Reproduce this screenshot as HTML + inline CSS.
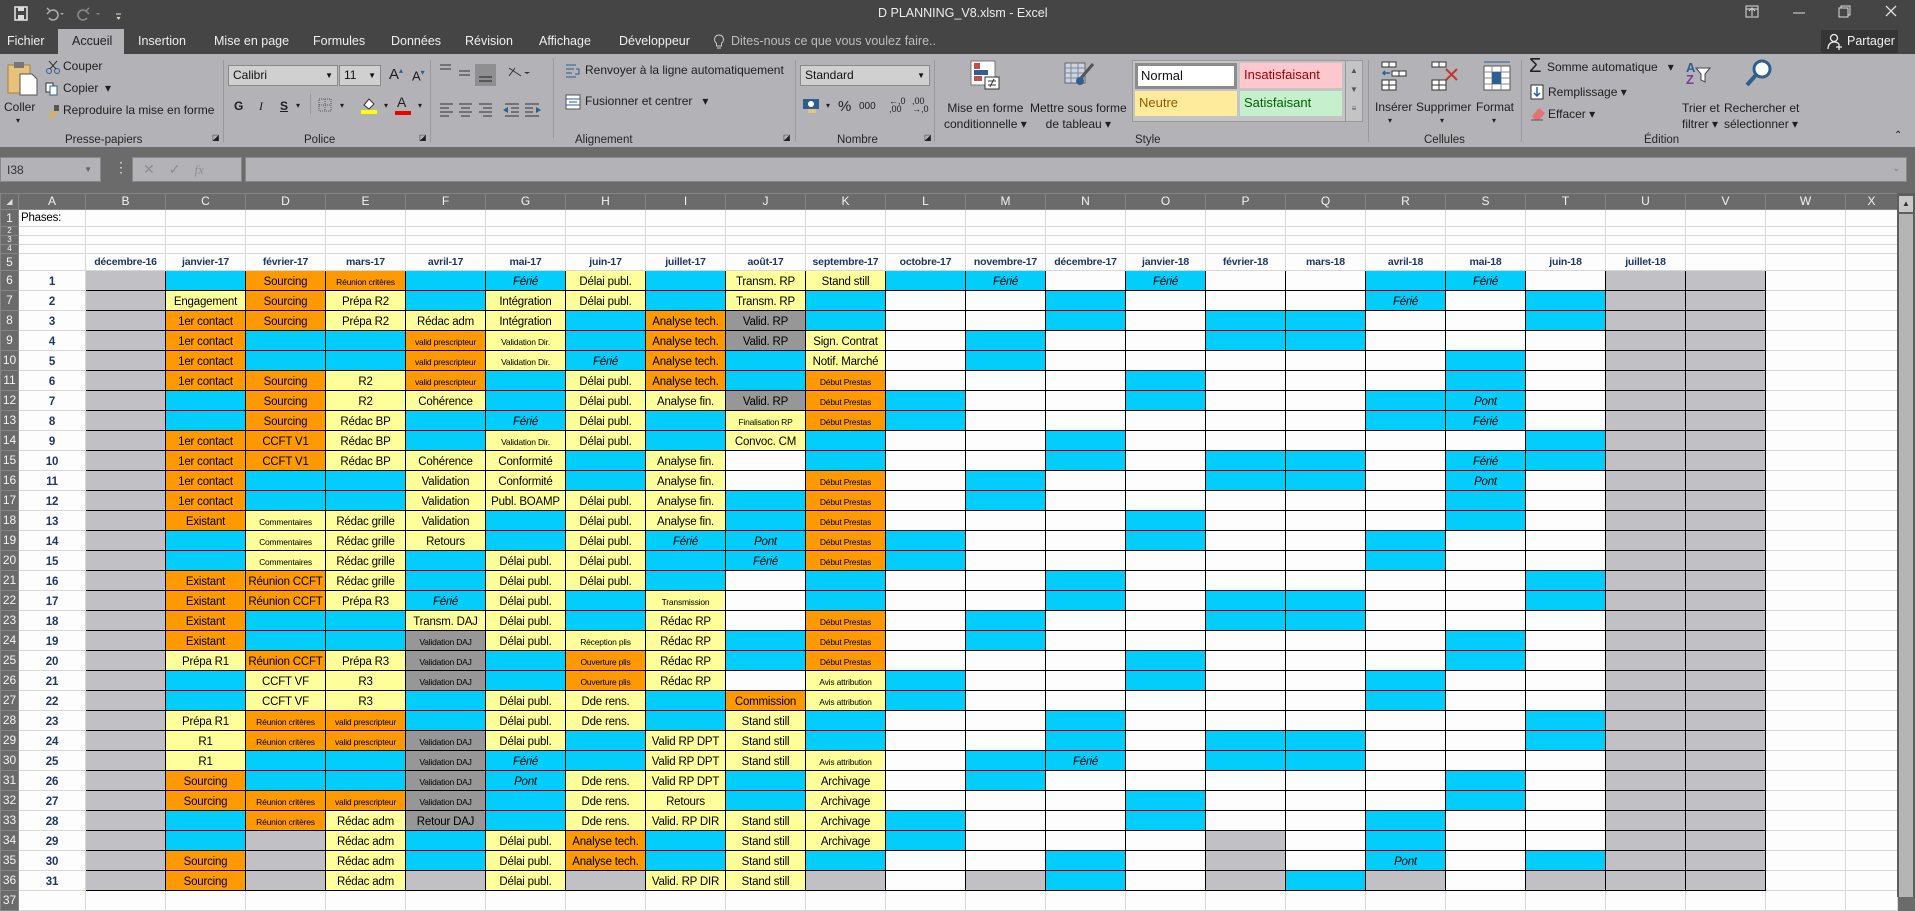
<!DOCTYPE html>
<html><head><meta charset="utf-8"><style>
*{margin:0;padding:0;box-sizing:border-box}
body{width:1915px;height:897px;overflow:hidden;background:#6b6b6b;font-family:"Liberation Sans",sans-serif;position:relative}
.a{position:absolute;white-space:nowrap}
#title{left:0;top:0;width:1915px;height:54px;background:#454545}
.tab{position:absolute;top:34px;font-size:12.5px;color:#f0f0f0}
#rib{left:0;top:54px;width:1915px;height:93px;background:#b3b2b6}
.rt{position:absolute;font-size:12px;color:#1e1e1e;white-space:nowrap}
.gl{position:absolute;top:80px;font-size:11.5px;color:#262626}
.sep{position:absolute;top:6px;width:1px;height:82px;background:#9a9a9e}
.box{position:absolute;background:#d0d0d0;border:1px solid #8a8a8a;font-size:12px;padding:2px 4px;color:#111}
table{position:absolute;left:0;top:193px;border-collapse:collapse;table-layout:fixed;font-family:"Liberation Sans",sans-serif}
td,th{padding:0;overflow:hidden;white-space:nowrap;text-align:center;vertical-align:bottom;font-size:11.5px;letter-spacing:-0.2px;line-height:15px;border:1px solid #d8d8d8;background:#fcfdfc}
th{background:#6b6b6b;color:#f2f2f2;font-weight:normal;border:1px solid #858585;font-size:12px;vertical-align:middle;letter-spacing:0}
td.t{border:1px solid #000}
.g{background:#c1c0c4}.c{background:#03cdfa}.o{background:#fe9a00}.y{background:#feff9a}.d{background:#979797}.w{background:#fcfdfc}
td.s{font-size:8.5px;letter-spacing:-0.2px}.i{font-style:italic}
td.m{color:#1f3764;font-weight:bold;font-size:10.5px;letter-spacing:-0.2px}
.n{color:#1f3764;font-weight:bold}
</style></head><body>
<div id="title" class="a"></div>
<svg class="a" style="left:12px;top:5px" width="110" height="18" viewBox="0 0 110 18"><rect x="3" y="2" width="12" height="13" fill="none" stroke="#ddd" stroke-width="1.6"/><rect x="6" y="2" width="6" height="4" fill="#ddd"/><rect x="6" y="10" width="6" height="5" fill="#ddd"/><path d="M38 6 a5 5 0 1 1 -1 7" fill="none" stroke="#aaa" stroke-width="1.6"/><path d="M35 3 l3 3 -3 3" fill="none" stroke="#aaa" stroke-width="1.5"/><path d="M48 8l2 2 2-2" fill="#aaa"/><path d="M74 6 a5 5 0 1 0 1 7" fill="none" stroke="#888" stroke-width="1.6"/><path d="M77 3 l-3 3 3 3" fill="none" stroke="#888" stroke-width="1.5"/><path d="M84 8l2 2 2-2" fill="#888"/><path d="M104 9h5M105 12l1.5 2 1.5-2" stroke="#ddd" fill="#ddd"/></svg>
<div class="a" style="left:878px;top:6px;font-size:12.5px;color:#eee">D PLANNING_V8.xlsm - Excel</div>
<svg class="a" style="left:1740px;top:2px" width="170" height="20"><rect x="6" y="4" width="12" height="11" fill="none" stroke="#ddd"/><path d="M12 14V7M9 9l3-3 3 3M6 7h12" stroke="#ddd" fill="none"/><path d="M53 11h12" stroke="#ddd"/><rect x="99" y="6" width="9" height="9" fill="none" stroke="#ddd"/><path d="M101 6V4h9v9h-2" stroke="#ddd" fill="none"/><path d="M146 4l10 10M156 4l-10 10" stroke="#ddd" stroke-width="1.3"/></svg>
<div class="tab" style="left:7px">Fichier</div>
<div class="a" style="left:58px;top:29px;width:66px;height:26px;background:#b3b2b6"></div>
<div class="tab" style="left:72px;color:#222">Accueil</div>
<div class="tab" style="left:138px">Insertion</div>
<div class="tab" style="left:214px">Mise en page</div>
<div class="tab" style="left:313px">Formules</div>
<div class="tab" style="left:391px">Données</div>
<div class="tab" style="left:465px">Révision</div>
<div class="tab" style="left:539px">Affichage</div>
<div class="tab" style="left:619px">Développeur</div>
<svg class="a" style="left:713px;top:34px" width="12" height="16"><path d="M6 1a4.5 4.5 0 0 0-2.5 8.2V12h5V9.2A4.5 4.5 0 0 0 6 1zM4 14h4" fill="none" stroke="#ccc"/></svg>
<div class="tab" style="left:731px;color:#bdbdbd">Dites-nous ce que vous voulez faire..</div>
<div class="a" style="left:1821px;top:30px;width:77px;height:23px;background:#353535"></div>
<svg class="a" style="left:1827px;top:33px" width="16" height="18"><circle cx="7" cy="5" r="3.5" fill="none" stroke="#eee" stroke-width="1.3"/><path d="M1 16c0-5 3-7 6-7s4 1 5 2M12 11v6M9 14h6" fill="none" stroke="#eee" stroke-width="1.3"/></svg>
<div class="tab" style="left:1847px;top:34px;color:#f2f2f2">Partager</div>

<div id="rib" class="a">
 <svg style="position:absolute;left:6px;top:6px" width="34" height="36"><rect x="2" y="5" width="22" height="28" fill="#e6c27a" stroke="#a58340"/><rect x="8" y="2" width="10" height="6" fill="#777"/><path d="M14 14h12l5 5v16H14z" fill="#fff" stroke="#555"/></svg>
 <div class="rt" style="left:4px;top:46px">Coller</div>
 <div class="rt" style="left:16px;top:62px;font-size:8px">▾</div>
 <svg style="position:absolute;left:45px;top:6px" width="16" height="14"><circle cx="4" cy="11" r="2.5" fill="none" stroke="#2f5f8f"/><circle cx="12" cy="11" r="2.5" fill="none" stroke="#2f5f8f"/><path d="M5 9L12 1M11 9L4 1" stroke="#333"/></svg>
 <div class="rt" style="left:63px;top:5px">Couper</div>
 <svg style="position:absolute;left:45px;top:28px" width="14" height="14"><rect x="1" y="1" width="7" height="9" fill="#fff" stroke="#333"/><rect x="5" y="4" width="7" height="9" fill="#fff" stroke="#2f5f8f"/></svg>
 <div class="rt" style="left:63px;top:27px">Copier &nbsp;▾</div>
 <svg style="position:absolute;left:46px;top:50px" width="14" height="14"><path d="M2 13l6-7 3 3-6 6z" fill="#d9b055"/><rect x="8" y="1" width="5" height="6" fill="#555"/></svg>
 <div class="rt" style="left:63px;top:49px">Reproduire la mise en forme</div>
 <div class="gl" style="left:65px">Presse-papiers</div>
 <div class="rt" style="left:212px;top:79px;font-size:8px">◪</div>
 <div class="sep" style="left:223px"></div>
 <div class="box" style="left:228px;top:11px;width:110px;height:21px">Calibri<span style="position:absolute;right:4px;font-size:8px;top:5px">▼</span></div>
 <div class="box" style="left:339px;top:11px;width:42px;height:21px">11<span style="position:absolute;right:4px;font-size:8px;top:5px">▼</span></div>
 <div class="rt" style="left:389px;top:12px;font-size:15px">A<sup style="font-size:8px;color:#2f5f8f">▴</sup></div>
 <div class="rt" style="left:412px;top:14px;font-size:13px">A<sup style="font-size:8px;color:#2f5f8f">▾</sup></div>
 <div class="rt" style="left:234px;top:45px;font-weight:bold">G</div>
 <div class="rt" style="left:259px;top:45px;font-style:italic;font-family:'Liberation Serif'">I</div>
 <div class="rt" style="left:280px;top:45px;text-decoration:underline;font-weight:bold">S</div>
 <div class="rt" style="left:296px;top:47px;font-size:8px">▾</div>
 <div class="sep" style="left:310px;top:40px;height:20px"></div>
 <svg style="position:absolute;left:318px;top:44px" width="14" height="14"><rect x="1" y="1" width="12" height="12" fill="none" stroke="#555" stroke-dasharray="1 1"/><path d="M7 1v12M1 7h12" stroke="#555" stroke-dasharray="1 1"/></svg>
 <div class="rt" style="left:340px;top:47px;font-size:8px">▾</div>
 <svg style="position:absolute;left:360px;top:42px" width="18" height="18"><path d="M4 9l5-6 5 5-5 5z" fill="#fff" stroke="#333"/><rect x="1" y="14" width="16" height="4" fill="#ffff00"/></svg>
 <div class="rt" style="left:384px;top:47px;font-size:8px">▾</div>
 <div class="rt" style="left:397px;top:40px;font-size:14px">A</div>
 <div class="a" style="left:395px;top:57px;width:16px;height:4px;background:#e00"></div>
 <div class="rt" style="left:418px;top:47px;font-size:8px">▾</div>
 <div class="gl" style="left:304px">Police</div>
 <div class="rt" style="left:419px;top:79px;font-size:8px">◪</div>
 <div class="sep" style="left:430px"></div>
 <svg style="position:absolute;left:437px;top:8px" width="120" height="60"><g stroke="#333" stroke-width="1"><path d="M3 3h11M3 7h11"/><path d="M22 9h11M22 13h11"/></g><rect x="38" y="2" width="21" height="22" fill="#8f8f91"/><path d="M42 15h13M42 19h13" stroke="#222"/><path d="M72 6l12 8M72 14l6-8" stroke="#333"/><path d="M87 10l3 2 3-2" fill="#333"/><g stroke="#333"><path d="M3 42h13M3 46h9M3 50h13M3 54h9"/><path d="M22 42h13M24 46h9M22 50h13M24 54h9"/><path d="M42 42h13M46 46h9M42 50h13M46 54h9"/></g><g stroke="#333"><path d="M68 42h14M74 46h8M74 50h8M68 54h14M88 42h14M88 46h8M88 50h8M88 54h14"/></g><path d="M66 48l5-3v6z M104 48l-5-3v6z" fill="#2f5f8f"/></svg>
 <div class="sep" style="left:553px;top:4px;height:80px"></div>
 <svg style="position:absolute;left:565px;top:9px" width="16" height="16"><path d="M1 2h10M1 6h8M1 10h6M1 14h10" stroke="#2f5f8f"/><path d="M11 6h3v5h-4" fill="none" stroke="#2f5f8f"/></svg>
 <div class="rt" style="left:585px;top:9px">Renvoyer à la ligne automatiquement</div>
 <svg style="position:absolute;left:565px;top:40px" width="16" height="16"><rect x="1" y="1" width="14" height="14" fill="#fff" stroke="#555"/><path d="M1 5h14M1 11h14M4 8h8" stroke="#2f5f8f"/></svg>
 <div class="rt" style="left:585px;top:40px">Fusionner et centrer &nbsp;&nbsp;▾</div>
 <div class="gl" style="left:575px">Alignement</div>
 <div class="rt" style="left:783px;top:79px;font-size:8px">◪</div>
 <div class="sep" style="left:795px"></div>
 <div class="box" style="left:800px;top:11px;width:130px;height:21px">Standard<span style="position:absolute;right:4px;font-size:8px;top:5px">▼</span></div>
 <svg style="position:absolute;left:802px;top:44px" width="20" height="16"><rect x="1" y="1" width="16" height="10" fill="#2f5f8f"/><circle cx="9" cy="6" r="3" fill="#fff"/><rect x="6" y="11" width="8" height="4" fill="#e6c27a"/></svg>
 <div class="rt" style="left:826px;top:47px;font-size:8px">▾</div>
 <div class="rt" style="left:838px;top:44px;font-size:15px">%</div>
 <div class="rt" style="left:859px;top:47px;font-size:10px">000</div>
 <div class="rt" style="left:889px;top:43px;font-size:9px;line-height:8px">←,0<br>,00</div>
 <div class="rt" style="left:912px;top:43px;font-size:9px;line-height:8px">,00<br>→,0</div>
 <div class="gl" style="left:837px">Nombre</div>
 <div class="rt" style="left:924px;top:79px;font-size:8px">◪</div>
 <div class="sep" style="left:934px"></div>
 <svg style="position:absolute;left:970px;top:6px" width="32" height="30"><rect x="1" y="1" width="24" height="24" fill="#fff" stroke="#777"/><rect x="4" y="3" width="6" height="6" fill="#c0504d"/><rect x="4" y="10" width="14" height="5" fill="#2f5f8f"/><rect x="4" y="16" width="8" height="5" fill="#c0504d"/><rect x="15" y="17" width="14" height="12" fill="#fff" stroke="#333"/><path d="M18 21h8M18 25h8M24 19l-4 8" stroke="#333"/></svg>
 <div class="rt" style="left:944px;top:46px;line-height:16px;text-align:center">Mise en forme<br>conditionnelle ▾</div>
 <svg style="position:absolute;left:1064px;top:6px" width="32" height="30"><rect x="1" y="3" width="20" height="20" fill="#c9d4e6" stroke="#666"/><path d="M1 8h20M1 13h20M1 18h20M7 3v20M14 3v20" stroke="#888"/><path d="M29 4l-12 14" stroke="#555" stroke-width="3"/><circle cx="16" cy="21" r="4" fill="#2f5f8f"/></svg>
 <div class="rt" style="left:1030px;top:46px;line-height:16px;text-align:center">Mettre sous forme<br>de tableau ▾</div>
 <div class="a" style="left:1132px;top:6px;width:231px;height:62px;background:#c4c4c7;border:1px solid #999"></div>
 <div class="a" style="left:1135px;top:9px;width:102px;height:26px;background:#fff;border:3px solid #8c8c8c;font-size:13px;padding:2px 3px;color:#111">Normal</div>
 <div class="a" style="left:1240px;top:9px;width:102px;height:25px;background:#ffc7ce;font-size:13px;padding:4px 4px;color:#9c0006">Insatisfaisant</div>
 <div class="a" style="left:1135px;top:37px;width:102px;height:25px;background:#ffeb9c;font-size:13px;padding:4px 4px;color:#9c5700">Neutre</div>
 <div class="a" style="left:1240px;top:37px;width:102px;height:25px;background:#c6efce;font-size:13px;padding:4px 4px;color:#006100">Satisfaisant</div>
 <div class="a" style="left:1345px;top:7px;width:17px;height:60px;border-left:1px solid #999;font-size:8px;color:#555;text-align:center;line-height:19px">▲<br>▼<br>≡</div>
 <div class="gl" style="left:1135px">Style</div>
 <div class="sep" style="left:1368px"></div>
 <svg style="position:absolute;left:1380px;top:6px" width="160" height="34"><g fill="#fff" stroke="#333"><rect x="2" y="2" width="7" height="5"/><rect x="9" y="2" width="7" height="5"/><rect x="12" y="11" width="7" height="5"/><rect x="19" y="11" width="7" height="5"/><rect x="2" y="20" width="7" height="5"/><rect x="9" y="20" width="7" height="5"/><rect x="2" y="25" width="7" height="5"/><rect x="9" y="25" width="7" height="5"/></g><path d="M10 13H3M5 11l-2 2 2 2" stroke="#2f5f8f" fill="none" stroke-width="1.5"/><g fill="#fff" stroke="#333"><rect x="52" y="2" width="7" height="5"/><rect x="59" y="2" width="7" height="5"/><rect x="52" y="20" width="7" height="5"/><rect x="59" y="20" width="7" height="5"/><rect x="52" y="25" width="7" height="5"/><rect x="59" y="25" width="7" height="5"/></g><path d="M66 9l11 11M77 9L66 20" stroke="#c0392b" stroke-width="2"/><rect x="104" y="6" width="26" height="24" fill="#fff" stroke="#555"/><path d="M104 12h26M104 18h26M104 24h26M112 6v24M121 6v24" stroke="#888"/><rect x="112" y="12" width="9" height="12" fill="#2f5f8f"/><path d="M104 2h26" stroke="#2f5f8f"/></svg>
 <div class="rt" style="left:1375px;top:46px">Insérer</div>
 <div class="rt" style="left:1416px;top:46px">Supprimer</div>
 <div class="rt" style="left:1476px;top:46px">Format</div>
 <div class="rt" style="left:1388px;top:62px;font-size:8px">▾</div><div class="rt" style="left:1440px;top:62px;font-size:8px">▾</div><div class="rt" style="left:1492px;top:62px;font-size:8px">▾</div>
 <div class="gl" style="left:1424px">Cellules</div>
 <div class="sep" style="left:1521px"></div>
 <div class="rt" style="left:1529px;top:1px;font-size:20px">Σ</div>
 <div class="rt" style="left:1547px;top:6px">Somme automatique &nbsp;&nbsp;▾</div>
 <svg style="position:absolute;left:1530px;top:30px" width="14" height="16"><rect x="1" y="1" width="12" height="14" fill="#fff" stroke="#333"/><path d="M7 3v9M4 9l3 3 3-3" stroke="#2f5f8f" fill="none" stroke-width="1.5"/></svg>
 <div class="rt" style="left:1548px;top:31px">Remplissage ▾</div>
 <svg style="position:absolute;left:1530px;top:53px" width="16" height="14"><path d="M2 9l7-8 6 5-6 7H5z" fill="#e57373"/><path d="M1 13h12" stroke="#555"/></svg>
 <div class="rt" style="left:1548px;top:53px">Effacer ▾</div>
 <div class="rt" style="left:1686px;top:8px;font-size:13px;color:#2f5f8f;line-height:12px;font-weight:bold">A<br><span style="color:#7d3c98">Z</span></div>
 <svg style="position:absolute;left:1695px;top:12px" width="16" height="18"><path d="M1 2h14l-5 6v8l-4-2V8z" fill="#fff" stroke="#444"/></svg>
 <div class="rt" style="left:1682px;top:46px;line-height:16px">Trier et<br>filtrer ▾</div>
 <svg style="position:absolute;left:1744px;top:4px" width="30" height="32"><circle cx="18" cy="11" r="8" fill="#fff" stroke="#2f5f8f" stroke-width="3"/><path d="M12 17l-9 10" stroke="#2f5f8f" stroke-width="4"/></svg>
 <div class="rt" style="left:1724px;top:46px;line-height:16px">Rechercher et<br>sélectionner ▾</div>
 <div class="gl" style="left:1644px">Édition</div>
 <div class="rt" style="left:1894px;top:76px;font-size:10px">⌃</div>
</div>
<div class="a" style="left:0;top:157px;width:101px;height:25px;background:#b3b2b6;border:1px solid #888;font-size:12px;padding:5px 6px;color:#333">I38<span style="position:absolute;right:8px;top:7px;font-size:8px;color:#666">▼</span></div>
<div class="a" style="left:114px;top:159px;font-size:14px;color:#ddd">⋮</div>
<div class="a" style="left:132px;top:157px;width:110px;height:25px;background:#b3b2b6;border:1px solid #888;font-size:14px;color:#8e8e8e;padding:3px 10px;letter-spacing:14px">✕✓<i style="font-family:'Liberation Serif';font-size:13px;letter-spacing:0">fx</i></div>
<div class="a" style="left:245px;top:157px;width:1662px;height:25px;background:#b3b2b6;border:1px solid #888"><span style="position:absolute;right:6px;top:5px;font-size:9px;color:#777">⌄</span></div>

<table>
<colgroup><col style="width:18px"><col style="width:67px"><col span="22" style="width:80px"><col style="width:52px"></colgroup>
<tr style="height:15px"><th style="font-size:8px;color:#ddd">◢</th><th>A</th><th>B</th><th>C</th><th>D</th><th>E</th><th>F</th><th>G</th><th>H</th><th>I</th><th>J</th><th>K</th><th>L</th><th>M</th><th>N</th><th>O</th><th>P</th><th>Q</th><th>R</th><th>S</th><th>T</th><th>U</th><th>V</th><th>W</th><th>X</th></tr>
<tr style="height:17px"><th>1</th><td style="text-align:left;padding-left:2px">Phases:</td><td></td><td></td><td></td><td></td><td></td><td></td><td></td><td></td><td></td><td></td><td></td><td></td><td></td><td></td><td></td><td></td><td></td><td></td><td></td><td></td><td></td><td></td><td></td></tr>
<tr style="height:9px"><th style="font-size:8px;line-height:8px">2</th><td></td><td></td><td></td><td></td><td></td><td></td><td></td><td></td><td></td><td></td><td></td><td></td><td></td><td></td><td></td><td></td><td></td><td></td><td></td><td></td><td></td><td></td><td></td><td></td></tr>
<tr style="height:9px"><th style="font-size:8px;line-height:8px">3</th><td></td><td></td><td></td><td></td><td></td><td></td><td></td><td></td><td></td><td></td><td></td><td></td><td></td><td></td><td></td><td></td><td></td><td></td><td></td><td></td><td></td><td></td><td></td><td></td></tr>
<tr style="height:9px"><th style="font-size:8px;line-height:8px">4</th><td></td><td></td><td></td><td></td><td></td><td></td><td></td><td></td><td></td><td></td><td></td><td></td><td></td><td></td><td></td><td></td><td></td><td></td><td></td><td></td><td></td><td></td><td></td><td></td></tr>
<tr style="height:17px"><th>5</th><td></td><td class="m">décembre-16</td><td class="m">janvier-17</td><td class="m">février-17</td><td class="m">mars-17</td><td class="m">avril-17</td><td class="m">mai-17</td><td class="m">juin-17</td><td class="m">juillet-17</td><td class="m">août-17</td><td class="m">septembre-17</td><td class="m">octobre-17</td><td class="m">novembre-17</td><td class="m">décembre-17</td><td class="m">janvier-18</td><td class="m">février-18</td><td class="m">mars-18</td><td class="m">avril-18</td><td class="m">mai-18</td><td class="m">juin-18</td><td class="m">juillet-18</td><td></td><td></td><td></td></tr>
<tr style="height:20px"><th>6</th><td class="n">1</td><td class="t g"></td><td class="t c"></td><td class="t o">Sourcing</td><td class="t o s">Réunion critères</td><td class="t c"></td><td class="t c i">Férié</td><td class="t y">Délai publ.</td><td class="t c"></td><td class="t y">Transm. RP</td><td class="t y">Stand still</td><td class="t c"></td><td class="t c i">Férié</td><td class="t w"></td><td class="t c i">Férié</td><td class="t w"></td><td class="t w"></td><td class="t c"></td><td class="t c i">Férié</td><td class="t w"></td><td class="t g"></td><td class="t g"></td><td></td><td></td></tr>
<tr style="height:20px"><th>7</th><td class="n">2</td><td class="t g"></td><td class="t y">Engagement</td><td class="t o">Sourcing</td><td class="t y">Prépa R2</td><td class="t c"></td><td class="t y">Intégration</td><td class="t y">Délai publ.</td><td class="t c"></td><td class="t y">Transm. RP</td><td class="t c"></td><td class="t w"></td><td class="t w"></td><td class="t c"></td><td class="t w"></td><td class="t w"></td><td class="t w"></td><td class="t c i">Férié</td><td class="t w"></td><td class="t c"></td><td class="t g"></td><td class="t g"></td><td></td><td></td></tr>
<tr style="height:20px"><th>8</th><td class="n">3</td><td class="t g"></td><td class="t o">1er contact</td><td class="t o">Sourcing</td><td class="t y">Prépa R2</td><td class="t y">Rédac adm</td><td class="t y">Intégration</td><td class="t c"></td><td class="t o">Analyse tech.</td><td class="t d">Valid. RP</td><td class="t c"></td><td class="t w"></td><td class="t w"></td><td class="t c"></td><td class="t w"></td><td class="t c"></td><td class="t c"></td><td class="t w"></td><td class="t w"></td><td class="t c"></td><td class="t g"></td><td class="t g"></td><td></td><td></td></tr>
<tr style="height:20px"><th>9</th><td class="n">4</td><td class="t g"></td><td class="t o">1er contact</td><td class="t c"></td><td class="t c"></td><td class="t o s">valid prescripteur</td><td class="t y s">Validation Dir.</td><td class="t c"></td><td class="t o">Analyse tech.</td><td class="t d">Valid. RP</td><td class="t y">Sign. Contrat</td><td class="t w"></td><td class="t c"></td><td class="t w"></td><td class="t w"></td><td class="t c"></td><td class="t c"></td><td class="t w"></td><td class="t w"></td><td class="t w"></td><td class="t g"></td><td class="t g"></td><td></td><td></td></tr>
<tr style="height:20px"><th>10</th><td class="n">5</td><td class="t g"></td><td class="t o">1er contact</td><td class="t c"></td><td class="t c"></td><td class="t o s">valid prescripteur</td><td class="t y s">Validation Dir.</td><td class="t c i">Férié</td><td class="t o">Analyse tech.</td><td class="t c"></td><td class="t y">Notif. Marché</td><td class="t w"></td><td class="t c"></td><td class="t w"></td><td class="t w"></td><td class="t w"></td><td class="t w"></td><td class="t w"></td><td class="t c"></td><td class="t w"></td><td class="t g"></td><td class="t g"></td><td></td><td></td></tr>
<tr style="height:20px"><th>11</th><td class="n">6</td><td class="t g"></td><td class="t o">1er contact</td><td class="t o">Sourcing</td><td class="t y">R2</td><td class="t o s">valid prescripteur</td><td class="t c"></td><td class="t y">Délai publ.</td><td class="t o">Analyse tech.</td><td class="t c"></td><td class="t o s">Début Prestas</td><td class="t w"></td><td class="t w"></td><td class="t w"></td><td class="t c"></td><td class="t w"></td><td class="t w"></td><td class="t w"></td><td class="t c"></td><td class="t w"></td><td class="t g"></td><td class="t g"></td><td></td><td></td></tr>
<tr style="height:20px"><th>12</th><td class="n">7</td><td class="t g"></td><td class="t c"></td><td class="t o">Sourcing</td><td class="t y">R2</td><td class="t y">Cohérence</td><td class="t c"></td><td class="t y">Délai publ.</td><td class="t y">Analyse fin.</td><td class="t d">Valid. RP</td><td class="t o s">Début Prestas</td><td class="t c"></td><td class="t w"></td><td class="t w"></td><td class="t c"></td><td class="t w"></td><td class="t w"></td><td class="t c"></td><td class="t c i">Pont</td><td class="t w"></td><td class="t g"></td><td class="t g"></td><td></td><td></td></tr>
<tr style="height:20px"><th>13</th><td class="n">8</td><td class="t g"></td><td class="t c"></td><td class="t o">Sourcing</td><td class="t y">Rédac BP</td><td class="t c"></td><td class="t c i">Férié</td><td class="t y">Délai publ.</td><td class="t c"></td><td class="t y s">Finalisation RP</td><td class="t o s">Début Prestas</td><td class="t c"></td><td class="t w"></td><td class="t w"></td><td class="t w"></td><td class="t w"></td><td class="t w"></td><td class="t c"></td><td class="t c i">Férié</td><td class="t w"></td><td class="t g"></td><td class="t g"></td><td></td><td></td></tr>
<tr style="height:20px"><th>14</th><td class="n">9</td><td class="t g"></td><td class="t o">1er contact</td><td class="t o">CCFT V1</td><td class="t y">Rédac BP</td><td class="t c"></td><td class="t y s">Validation Dir.</td><td class="t y">Délai publ.</td><td class="t c"></td><td class="t y">Convoc. CM</td><td class="t c"></td><td class="t w"></td><td class="t w"></td><td class="t c"></td><td class="t w"></td><td class="t w"></td><td class="t w"></td><td class="t w"></td><td class="t w"></td><td class="t c"></td><td class="t g"></td><td class="t g"></td><td></td><td></td></tr>
<tr style="height:20px"><th>15</th><td class="n">10</td><td class="t g"></td><td class="t o">1er contact</td><td class="t o">CCFT V1</td><td class="t y">Rédac BP</td><td class="t y">Cohérence</td><td class="t y">Conformité</td><td class="t c"></td><td class="t y">Analyse fin.</td><td class="t w"></td><td class="t c"></td><td class="t w"></td><td class="t w"></td><td class="t c"></td><td class="t w"></td><td class="t c"></td><td class="t c"></td><td class="t w"></td><td class="t c i">Férié</td><td class="t c"></td><td class="t g"></td><td class="t g"></td><td></td><td></td></tr>
<tr style="height:20px"><th>16</th><td class="n">11</td><td class="t g"></td><td class="t o">1er contact</td><td class="t c"></td><td class="t c"></td><td class="t y">Validation</td><td class="t y">Conformité</td><td class="t c"></td><td class="t y">Analyse fin.</td><td class="t w"></td><td class="t o s">Début Prestas</td><td class="t w"></td><td class="t c"></td><td class="t w"></td><td class="t w"></td><td class="t c"></td><td class="t c"></td><td class="t w"></td><td class="t c i">Pont</td><td class="t w"></td><td class="t g"></td><td class="t g"></td><td></td><td></td></tr>
<tr style="height:20px"><th>17</th><td class="n">12</td><td class="t g"></td><td class="t o">1er contact</td><td class="t c"></td><td class="t c"></td><td class="t y">Validation</td><td class="t y">Publ. BOAMP</td><td class="t y">Délai publ.</td><td class="t y">Analyse fin.</td><td class="t c"></td><td class="t o s">Début Prestas</td><td class="t w"></td><td class="t c"></td><td class="t w"></td><td class="t w"></td><td class="t w"></td><td class="t w"></td><td class="t w"></td><td class="t c"></td><td class="t w"></td><td class="t g"></td><td class="t g"></td><td></td><td></td></tr>
<tr style="height:20px"><th>18</th><td class="n">13</td><td class="t g"></td><td class="t o">Existant</td><td class="t y s">Commentaires</td><td class="t y">Rédac grille</td><td class="t y">Validation</td><td class="t c"></td><td class="t y">Délai publ.</td><td class="t y">Analyse fin.</td><td class="t c"></td><td class="t o s">Début Prestas</td><td class="t w"></td><td class="t w"></td><td class="t w"></td><td class="t c"></td><td class="t w"></td><td class="t w"></td><td class="t w"></td><td class="t c"></td><td class="t w"></td><td class="t g"></td><td class="t g"></td><td></td><td></td></tr>
<tr style="height:20px"><th>19</th><td class="n">14</td><td class="t g"></td><td class="t c"></td><td class="t y s">Commentaires</td><td class="t y">Rédac grille</td><td class="t y">Retours</td><td class="t c"></td><td class="t y">Délai publ.</td><td class="t c i">Férié</td><td class="t c i">Pont</td><td class="t o s">Début Prestas</td><td class="t c"></td><td class="t w"></td><td class="t w"></td><td class="t c"></td><td class="t w"></td><td class="t w"></td><td class="t c"></td><td class="t w"></td><td class="t w"></td><td class="t g"></td><td class="t g"></td><td></td><td></td></tr>
<tr style="height:20px"><th>20</th><td class="n">15</td><td class="t g"></td><td class="t c"></td><td class="t y s">Commentaires</td><td class="t y">Rédac grille</td><td class="t c"></td><td class="t y">Délai publ.</td><td class="t y">Délai publ.</td><td class="t c"></td><td class="t c i">Férié</td><td class="t o s">Début Prestas</td><td class="t c"></td><td class="t w"></td><td class="t w"></td><td class="t w"></td><td class="t w"></td><td class="t w"></td><td class="t c"></td><td class="t w"></td><td class="t w"></td><td class="t g"></td><td class="t g"></td><td></td><td></td></tr>
<tr style="height:20px"><th>21</th><td class="n">16</td><td class="t g"></td><td class="t o">Existant</td><td class="t o">Réunion CCFT</td><td class="t y">Rédac grille</td><td class="t c"></td><td class="t y">Délai publ.</td><td class="t y">Délai publ.</td><td class="t c"></td><td class="t w"></td><td class="t c"></td><td class="t w"></td><td class="t w"></td><td class="t c"></td><td class="t w"></td><td class="t w"></td><td class="t w"></td><td class="t w"></td><td class="t w"></td><td class="t c"></td><td class="t g"></td><td class="t g"></td><td></td><td></td></tr>
<tr style="height:20px"><th>22</th><td class="n">17</td><td class="t g"></td><td class="t o">Existant</td><td class="t o">Réunion CCFT</td><td class="t y">Prépa R3</td><td class="t c i">Férié</td><td class="t y">Délai publ.</td><td class="t c"></td><td class="t y s">Transmission</td><td class="t w"></td><td class="t c"></td><td class="t w"></td><td class="t w"></td><td class="t c"></td><td class="t w"></td><td class="t c"></td><td class="t c"></td><td class="t w"></td><td class="t w"></td><td class="t c"></td><td class="t g"></td><td class="t g"></td><td></td><td></td></tr>
<tr style="height:20px"><th>23</th><td class="n">18</td><td class="t g"></td><td class="t o">Existant</td><td class="t c"></td><td class="t c"></td><td class="t y">Transm. DAJ</td><td class="t y">Délai publ.</td><td class="t c"></td><td class="t y">Rédac RP</td><td class="t w"></td><td class="t o s">Début Prestas</td><td class="t w"></td><td class="t c"></td><td class="t w"></td><td class="t w"></td><td class="t c"></td><td class="t c"></td><td class="t w"></td><td class="t w"></td><td class="t w"></td><td class="t g"></td><td class="t g"></td><td></td><td></td></tr>
<tr style="height:20px"><th>24</th><td class="n">19</td><td class="t g"></td><td class="t o">Existant</td><td class="t c"></td><td class="t c"></td><td class="t d s">Validation DAJ</td><td class="t y">Délai publ.</td><td class="t y s">Réception plis</td><td class="t y">Rédac RP</td><td class="t c"></td><td class="t o s">Début Prestas</td><td class="t w"></td><td class="t c"></td><td class="t w"></td><td class="t w"></td><td class="t w"></td><td class="t w"></td><td class="t w"></td><td class="t c"></td><td class="t w"></td><td class="t g"></td><td class="t g"></td><td></td><td></td></tr>
<tr style="height:20px"><th>25</th><td class="n">20</td><td class="t g"></td><td class="t y">Prépa R1</td><td class="t o">Réunion CCFT</td><td class="t y">Prépa R3</td><td class="t d s">Validation DAJ</td><td class="t c"></td><td class="t o s">Ouverture plis</td><td class="t y">Rédac RP</td><td class="t c"></td><td class="t o s">Début Prestas</td><td class="t w"></td><td class="t w"></td><td class="t w"></td><td class="t c"></td><td class="t w"></td><td class="t w"></td><td class="t w"></td><td class="t c"></td><td class="t w"></td><td class="t g"></td><td class="t g"></td><td></td><td></td></tr>
<tr style="height:20px"><th>26</th><td class="n">21</td><td class="t g"></td><td class="t c"></td><td class="t y">CCFT VF</td><td class="t y">R3</td><td class="t d s">Validation DAJ</td><td class="t c"></td><td class="t o s">Ouverture plis</td><td class="t y">Rédac RP</td><td class="t w"></td><td class="t y s">Avis attribution</td><td class="t c"></td><td class="t w"></td><td class="t w"></td><td class="t c"></td><td class="t w"></td><td class="t w"></td><td class="t c"></td><td class="t w"></td><td class="t w"></td><td class="t g"></td><td class="t g"></td><td></td><td></td></tr>
<tr style="height:20px"><th>27</th><td class="n">22</td><td class="t g"></td><td class="t c"></td><td class="t y">CCFT VF</td><td class="t y">R3</td><td class="t c"></td><td class="t y">Délai publ.</td><td class="t y">Dde rens.</td><td class="t c"></td><td class="t o">Commission</td><td class="t y s">Avis attribution</td><td class="t c"></td><td class="t w"></td><td class="t w"></td><td class="t w"></td><td class="t w"></td><td class="t w"></td><td class="t c"></td><td class="t w"></td><td class="t w"></td><td class="t g"></td><td class="t g"></td><td></td><td></td></tr>
<tr style="height:20px"><th>28</th><td class="n">23</td><td class="t g"></td><td class="t y">Prépa R1</td><td class="t o s">Réunion critères</td><td class="t o s">valid prescripteur</td><td class="t c"></td><td class="t y">Délai publ.</td><td class="t y">Dde rens.</td><td class="t c"></td><td class="t y">Stand still</td><td class="t c"></td><td class="t w"></td><td class="t w"></td><td class="t c"></td><td class="t w"></td><td class="t w"></td><td class="t w"></td><td class="t w"></td><td class="t w"></td><td class="t c"></td><td class="t g"></td><td class="t g"></td><td></td><td></td></tr>
<tr style="height:20px"><th>29</th><td class="n">24</td><td class="t g"></td><td class="t y">R1</td><td class="t o s">Réunion critères</td><td class="t o s">valid prescripteur</td><td class="t d s">Validation DAJ</td><td class="t y">Délai publ.</td><td class="t c"></td><td class="t y">Valid RP DPT</td><td class="t y">Stand still</td><td class="t c"></td><td class="t w"></td><td class="t w"></td><td class="t c"></td><td class="t w"></td><td class="t c"></td><td class="t c"></td><td class="t w"></td><td class="t w"></td><td class="t c"></td><td class="t g"></td><td class="t g"></td><td></td><td></td></tr>
<tr style="height:20px"><th>30</th><td class="n">25</td><td class="t g"></td><td class="t y">R1</td><td class="t c"></td><td class="t c"></td><td class="t d s">Validation DAJ</td><td class="t c i">Férié</td><td class="t c"></td><td class="t y">Valid RP DPT</td><td class="t y">Stand still</td><td class="t y s">Avis attribution</td><td class="t w"></td><td class="t c"></td><td class="t c i">Férié</td><td class="t w"></td><td class="t c"></td><td class="t c"></td><td class="t w"></td><td class="t w"></td><td class="t w"></td><td class="t g"></td><td class="t g"></td><td></td><td></td></tr>
<tr style="height:20px"><th>31</th><td class="n">26</td><td class="t g"></td><td class="t o">Sourcing</td><td class="t c"></td><td class="t c"></td><td class="t d s">Validation DAJ</td><td class="t c i">Pont</td><td class="t y">Dde rens.</td><td class="t y">Valid RP DPT</td><td class="t c"></td><td class="t y">Archivage</td><td class="t w"></td><td class="t c"></td><td class="t w"></td><td class="t w"></td><td class="t w"></td><td class="t w"></td><td class="t w"></td><td class="t c"></td><td class="t w"></td><td class="t g"></td><td class="t g"></td><td></td><td></td></tr>
<tr style="height:20px"><th>32</th><td class="n">27</td><td class="t g"></td><td class="t o">Sourcing</td><td class="t o s">Réunion critères</td><td class="t o s">valid prescripteur</td><td class="t d s">Validation DAJ</td><td class="t c"></td><td class="t y">Dde rens.</td><td class="t y">Retours</td><td class="t c"></td><td class="t y">Archivage</td><td class="t w"></td><td class="t w"></td><td class="t w"></td><td class="t c"></td><td class="t w"></td><td class="t w"></td><td class="t w"></td><td class="t c"></td><td class="t w"></td><td class="t g"></td><td class="t g"></td><td></td><td></td></tr>
<tr style="height:20px"><th>33</th><td class="n">28</td><td class="t g"></td><td class="t c"></td><td class="t o s">Réunion critères</td><td class="t y">Rédac adm</td><td class="t d">Retour DAJ</td><td class="t c"></td><td class="t y">Dde rens.</td><td class="t y">Valid. RP DIR</td><td class="t y">Stand still</td><td class="t y">Archivage</td><td class="t c"></td><td class="t w"></td><td class="t w"></td><td class="t c"></td><td class="t w"></td><td class="t w"></td><td class="t c"></td><td class="t w"></td><td class="t w"></td><td class="t g"></td><td class="t g"></td><td></td><td></td></tr>
<tr style="height:20px"><th>34</th><td class="n">29</td><td class="t g"></td><td class="t c"></td><td class="t g"></td><td class="t y">Rédac adm</td><td class="t c"></td><td class="t y">Délai publ.</td><td class="t o">Analyse tech.</td><td class="t c"></td><td class="t y">Stand still</td><td class="t y">Archivage</td><td class="t c"></td><td class="t w"></td><td class="t w"></td><td class="t w"></td><td class="t g"></td><td class="t w"></td><td class="t c"></td><td class="t w"></td><td class="t w"></td><td class="t g"></td><td class="t g"></td><td></td><td></td></tr>
<tr style="height:20px"><th>35</th><td class="n">30</td><td class="t g"></td><td class="t o">Sourcing</td><td class="t g"></td><td class="t y">Rédac adm</td><td class="t c"></td><td class="t y">Délai publ.</td><td class="t o">Analyse tech.</td><td class="t c"></td><td class="t y">Stand still</td><td class="t c"></td><td class="t w"></td><td class="t w"></td><td class="t c"></td><td class="t w"></td><td class="t g"></td><td class="t w"></td><td class="t c i">Pont</td><td class="t w"></td><td class="t c"></td><td class="t g"></td><td class="t g"></td><td></td><td></td></tr>
<tr style="height:20px"><th>36</th><td class="n">31</td><td class="t g"></td><td class="t o">Sourcing</td><td class="t g"></td><td class="t y">Rédac adm</td><td class="t g"></td><td class="t y">Délai publ.</td><td class="t g"></td><td class="t y">Valid. RP DIR</td><td class="t y">Stand still</td><td class="t g"></td><td class="t w"></td><td class="t g"></td><td class="t c"></td><td class="t w"></td><td class="t g"></td><td class="t c"></td><td class="t g"></td><td class="t w"></td><td class="t g"></td><td class="t g"></td><td class="t g"></td><td></td><td></td></tr>
<tr style="height:20px"><th>37</th><td></td><td></td><td></td><td></td><td></td><td></td><td></td><td></td><td></td><td></td><td></td><td></td><td></td><td></td><td></td><td></td><td></td><td></td><td></td><td></td><td></td><td></td><td></td><td></td></tr>
</table>
<div class="a" style="left:1897px;top:193px;width:18px;height:704px;background:#5e5e5e"></div>
<div class="a" style="left:1899px;top:196px;width:14px;height:16px;background:#c8c8c8;font-size:8px;text-align:center;line-height:16px;color:#333">▲</div>
<div class="a" style="left:1899px;top:214px;width:14px;height:683px;background:#b5b5b5"></div>
</body></html>
